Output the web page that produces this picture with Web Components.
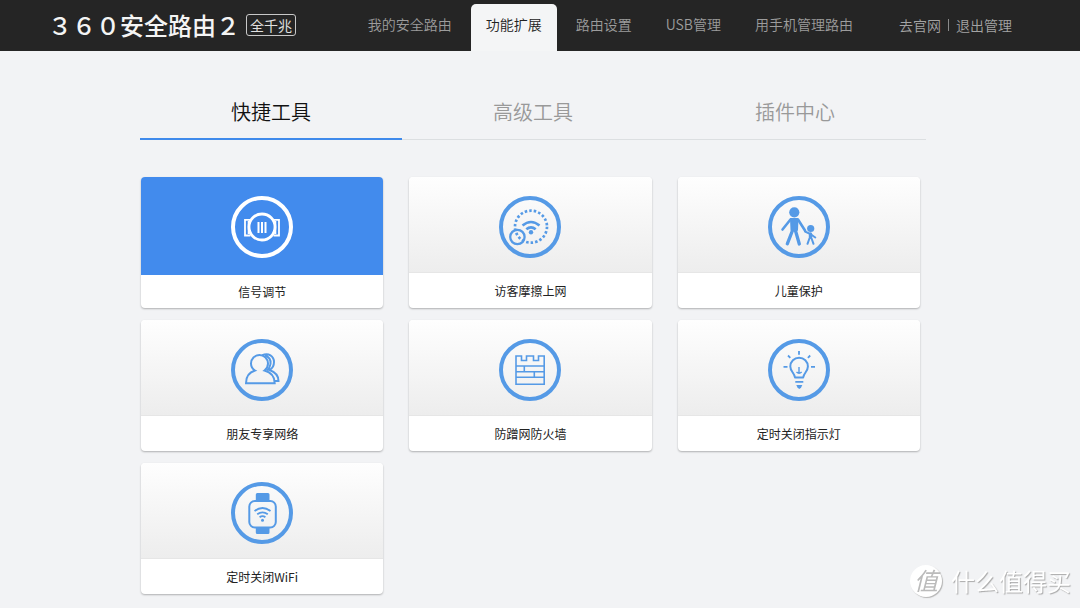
<!DOCTYPE html>
<html lang="zh-CN">
<head>
<meta charset="utf-8">
<meta name="viewport" content="width=device-width, initial-scale=1">
<title>360安全路由2</title>
<style>
  body {
    margin: 0;
    background: #f2f3f5;
    color: #222;
    font-family: "Noto Sans CJK SC", "Noto Sans", sans-serif;
    font-size: 14px;
    line-height: 20px;
  }
</style>
</head>
<body>
<router-app></router-app>

<template id="t-app">
  <style>
    :host { display: block; }
    main { padding: 0 154px 12px 140px; }
    .grid {
      display: grid;
      grid-template-columns: repeat(3, minmax(0, 1fr));
      gap: 12px 26px;
      padding: 37px 6px 0 1px;
    }
  </style>
  <app-header>
    <router-logo slot="logo"></router-logo>
    <nav-link href="#home">我的安全路由</nav-link>
    <nav-link href="#extend" active>功能扩展</nav-link>
    <nav-link href="#settings">路由设置</nav-link>
    <nav-link href="#usb">USB管理</nav-link>
    <nav-link href="#mobile">用手机管理路由</nav-link>
    <account-links slot="account"></account-links>
  </app-header>
  <main>
    <tool-tabs></tool-tabs>
    <div class="grid">
      <tool-card icon="signal" active>信号调节</tool-card>
      <tool-card icon="guest">访客摩擦上网</tool-card>
      <tool-card icon="child">儿童保护</tool-card>
      <tool-card icon="friends">朋友专享网络</tool-card>
      <tool-card icon="wall">防蹭网防火墙</tool-card>
      <tool-card icon="lamp">定时关闭指示灯</tool-card>
      <tool-card icon="watch">定时关闭WiFi</tool-card>
    </div>
  </main>
  <site-mark></site-mark>
</template>

<template id="t-header">
  <style>
    :host { display: block; background: #252525; }
    header { display: flex; align-items: stretch; min-height: 51px; padding: 0 68px 0 48px; box-sizing: border-box; }
    nav { display: flex; gap: 4px; margin-left: auto; padding-top: 4px; }
    .account { display: flex; align-items: center; margin-left: 31px; }
  </style>
  <header>
    <slot name="logo"></slot>
    <nav aria-label="主导航"><slot></slot></nav>
    <div class="account"><slot name="account"></slot></div>
  </header>
</template>

<template id="t-logo">
  <style>
    :host { display: flex; align-items: center; gap: 6px; padding-bottom: 2px; color: #f4f4f4; white-space: nowrap; }
    .name { font-size: 24px; line-height: 32px; font-weight: 500; font-variant-east-asian: full-width; }
    .model { font-size: 14px; line-height: 20px; border: 1px solid #c8c8c8; border-radius: 3px; padding: 0 3px; color: #e0e0e0; }
  </style>
  <span class="name">360安全路由2</span><span class="model">全千兆</span>
</template>

<template id="t-nav-link">
  <style>
    :host { display: flex; }
    a { display: flex; align-items: center; padding: 0 15px 8px; color: #9c9c9c; text-decoration: none; white-space: nowrap; font-weight: 350; border-radius: 5px 5px 0 0; }
    :host([active]) a { background: #f4f5f6; color: #222; }
  </style>
  <a><slot></slot></a>
</template>

<template id="t-account">
  <style>
    :host { display: flex; align-items: center; gap: 7px; padding-bottom: 2px; font-weight: 350; white-space: nowrap; }
    a { color: #a4a4a4; text-decoration: none; }
    i { width: 1px; height: 12px; background: #8a8a8a; }
  </style>
  <a href="#official">去官网</a><i></i><a href="#logout">退出管理</a>
</template>

<template id="t-tabs">
  <style>
    :host { display: block; }
    div { display: grid; grid-template-columns: repeat(3, 1fr); background: linear-gradient(#dcdfe1, #dcdfe1) 0 100% / 100% 1px no-repeat; }
    button { appearance: none; border: 0; border-bottom: 2px solid transparent; background: none; margin: 0; padding: 46px 0 11px; font: inherit; font-size: 20px; line-height: 30px; font-weight: 350; color: #999; cursor: pointer; }
    button[aria-selected="true"] { color: #111; border-color: #3f8aeb; }
  </style>
  <div role="tablist">
    <button role="tab" aria-selected="true">快捷工具</button>
    <button role="tab" aria-selected="false">高级工具</button>
    <button role="tab" aria-selected="false">插件中心</button>
  </div>
</template>

<template id="t-card">
  <style>
    :host { display: block; }
    a { display: flex; flex-direction: column; min-height: 131px; border-radius: 4px; overflow: hidden; background: #fff; color: #222; text-decoration: none; box-shadow: 0 1px 2px rgba(0, 0, 0, .28); }
    .art { display: flex; justify-content: center; padding: 19px 0 14px; border-bottom: 1px solid #e6e6e6; background: linear-gradient(#fefefe, #ededed); color: #559ae6; }
    .label { flex: 1; display: flex; align-items: center; justify-content: center; font-size: 12px; line-height: 18px; }
    :host([active]) .art { background: #428bed; color: #fff; border-color: #428bed; padding-bottom: 16px; }
  </style>
  <a href="#tool">
    <span class="art"><tool-icon></tool-icon></span>
    <span class="label"><slot></slot></span>
  </a>
</template>

<template id="t-mark">
  <style>
    :host { position: fixed; right: 9px; bottom: 11px; display: flex; align-items: center; gap: 9px; color: #fff; pointer-events: none; }
    .seal { width: 32px; height: 32px; border-radius: 50%; background: #fff; color: #bbb; font-size: 24px; line-height: 30px; text-align: center; font-style: italic; box-shadow: 1px 1px 1px #b4b4b4; }
    .word { font-size: 24px; line-height: 30px; text-shadow: 1px 1px 1px #a8a8a8; }
  </style>
  <span class="seal">值</span><span class="word">什么值得买</span>
</template>

<script>
  const icons = {
    signal: `<circle cx="31" cy="31" r="13" stroke-width="2.8"/>
      <path stroke-width="1.8" d="M19.5 23.9H14V39.5H19.5M17.6 25V38M42.5 23.9H48V39.5H42.5M44.4 25V38"/>
      <path stroke-width="2" d="M27.5 26V37M31 26V37M34.5 26V37"/>`,
    guest: `<circle cx="32" cy="30.7" r="16" stroke-width="2.7" stroke-dasharray="2.5 2.07"/>
      <circle cx="18.4" cy="41" r="7.2" stroke-width="2.3"/>
      <path stroke-width="2.6" d="M23.5 29.5Q32 22.5 40.5 29.5M27.3 33.3Q32 29.3 36.7 33.3"/>
      <circle cx="32" cy="36.3" r="2.2" fill="currentColor" stroke="none"/>`,
    child: `<g stroke-linecap="round" stroke-linejoin="round">
      <circle cx="26.3" cy="16.3" r="5.1" fill="currentColor" stroke="none"/>
      <path fill="currentColor" stroke-width="2" d="M23 23H29.5L29 34H23.5Z"/>
      <path stroke-width="2.6" d="M22.5 23.5L14.5 33.5M30 23.5L37 34.5"/>
      <path stroke-width="3.3" d="M24.7 34L19.3 47.8M27.3 34L31.3 48"/>
      <circle cx="42.7" cy="32.5" r="3.6" fill="currentColor" stroke="none"/>
      <path stroke-width="2" d="M37 35.5L42 37.8L47.3 41.5M41.6 42L39.5 47.8M43.4 42L45.5 47.8"/>
      <path stroke-width="3.4" d="M42.5 38V41"/></g>`,
    friends: `<path stroke-width="2" d="M15 44.2C15 37 19 33 24 31.5C21 29.5 20 27 20 24.5A8.5 8.5 0 0 1 37 24.5C37 27 36 29.5 33.5 31.5C39 33 43.7 37 43.7 44.2Z"/>
      <path stroke-width="2" d="M31 16.500C37.5 13 43 17.5 43 23C43 27 41 29.7 38.5 31C44 33 47.5 37 47.5 42H43.5M34 16.5C38.5 18 40 21.5 39.5 25C39.2 28 37.5 30 36 31.5"/>`,
    wall: `<path stroke-width="1.6" d="M17 17H22.5V21.5H27.5V17H34.5V21.5H39.5V17H45.2V45.2H17ZM17 27H45.2M17 32.7H45.2M17 38.3H45.2M25.3 27V32.7M35.3 32.7V38.3"/>`,
    lamp: `<path stroke-width="2" stroke-linejoin="round" d="M27 38.5C26.5 34 22.3 32.5 22.3 27.5A8.8 8.8 0 0 1 39.9 27.5C39.9 32.5 35.7 34 35.2 38.5Z"/>
      <path stroke-width="1.8" d="M31 12V15.7M15.5 27.8H19.5M43 27.8H47M20 16.5L22.3 18.8M42.2 16.5L39.9 18.8M27.3 42.8H35.3"/>
      <path stroke-width="1.4" d="M31 28V34M28.5 33Q31 35.5 33.7 33"/>
      <path fill="currentColor" stroke="none" d="M28.3 46H34.3L33 48.8L31.3 50L29.6 48.8Z"/>`,
    watch: `<rect x="18.3" y="19" width="26.5" height="26.5" rx="5.5" stroke-width="2"/>
      <path fill="currentColor" stroke="none" d="M24.8 18V12.5Q24.8 11 26.3 11H37Q38.5 11 38.5 12.5V18ZM24.8 45H38.5V50.5Q38.5 52 37 52H26.3Q24.8 52 24.8 50.5Z"/>
      <path stroke-width="1.8" d="M23.5 29Q31.5 23 39.5 29M26.2 32.3Q31.5 28.3 36.8 32.3M28.6 35.3Q31.5 33 34.4 35.3"/>
      <circle cx="31.5" cy="38.3" r="1.5" fill="currentColor" stroke="none"/>`
  };

  class Part extends HTMLElement {
    constructor() {
      super();
      const root = this.attachShadow({ mode: "open" });
      const id = this.constructor.template;
      if (id) root.append(document.getElementById(id).content.cloneNode(true));
    }
  }

  customElements.define("tool-icon", class extends Part {
    static observedAttributes = ["name"];
    attributeChangedCallback() {
      this.shadowRoot.innerHTML = `<style>:host{display:block;width:62px;height:62px}svg{display:block}</style>
        <svg viewBox="0 0 62 62" width="62" height="62" fill="none" stroke="currentColor" aria-hidden="true">
        <circle cx="31" cy="31" r="29" stroke-width="4"/>${icons[this.getAttribute("name")] || ""}</svg>`;
    }
  });
  customElements.define("tool-card", class extends Part {
    static template = "t-card";
    connectedCallback() {
      const name = this.getAttribute("icon");
      this.shadowRoot.querySelector("a").href = "#" + name;
      this.shadowRoot.querySelector("tool-icon").setAttribute("name", name);
    }
  });
  customElements.define("nav-link", class extends Part {
    static template = "t-nav-link";
    connectedCallback() {
      const a = this.shadowRoot.querySelector("a");
      a.href = this.getAttribute("href");
      if (this.hasAttribute("active")) a.setAttribute("aria-current", "page");
    }
  });
  customElements.define("tool-tabs", class extends Part {
    static template = "t-tabs";
    connectedCallback() {
      const tabs = this.shadowRoot.querySelectorAll("button");
      tabs.forEach(tab => tab.addEventListener("click", () =>
        tabs.forEach(t => t.setAttribute("aria-selected", String(t === tab)))));
    }
  });
  customElements.define("router-logo", class extends Part { static template = "t-logo"; });
  customElements.define("account-links", class extends Part { static template = "t-account"; });
  customElements.define("app-header", class extends Part { static template = "t-header"; });
  customElements.define("site-mark", class extends Part { static template = "t-mark"; });
  customElements.define("router-app", class extends Part { static template = "t-app"; });
</script>
</body>
</html>
